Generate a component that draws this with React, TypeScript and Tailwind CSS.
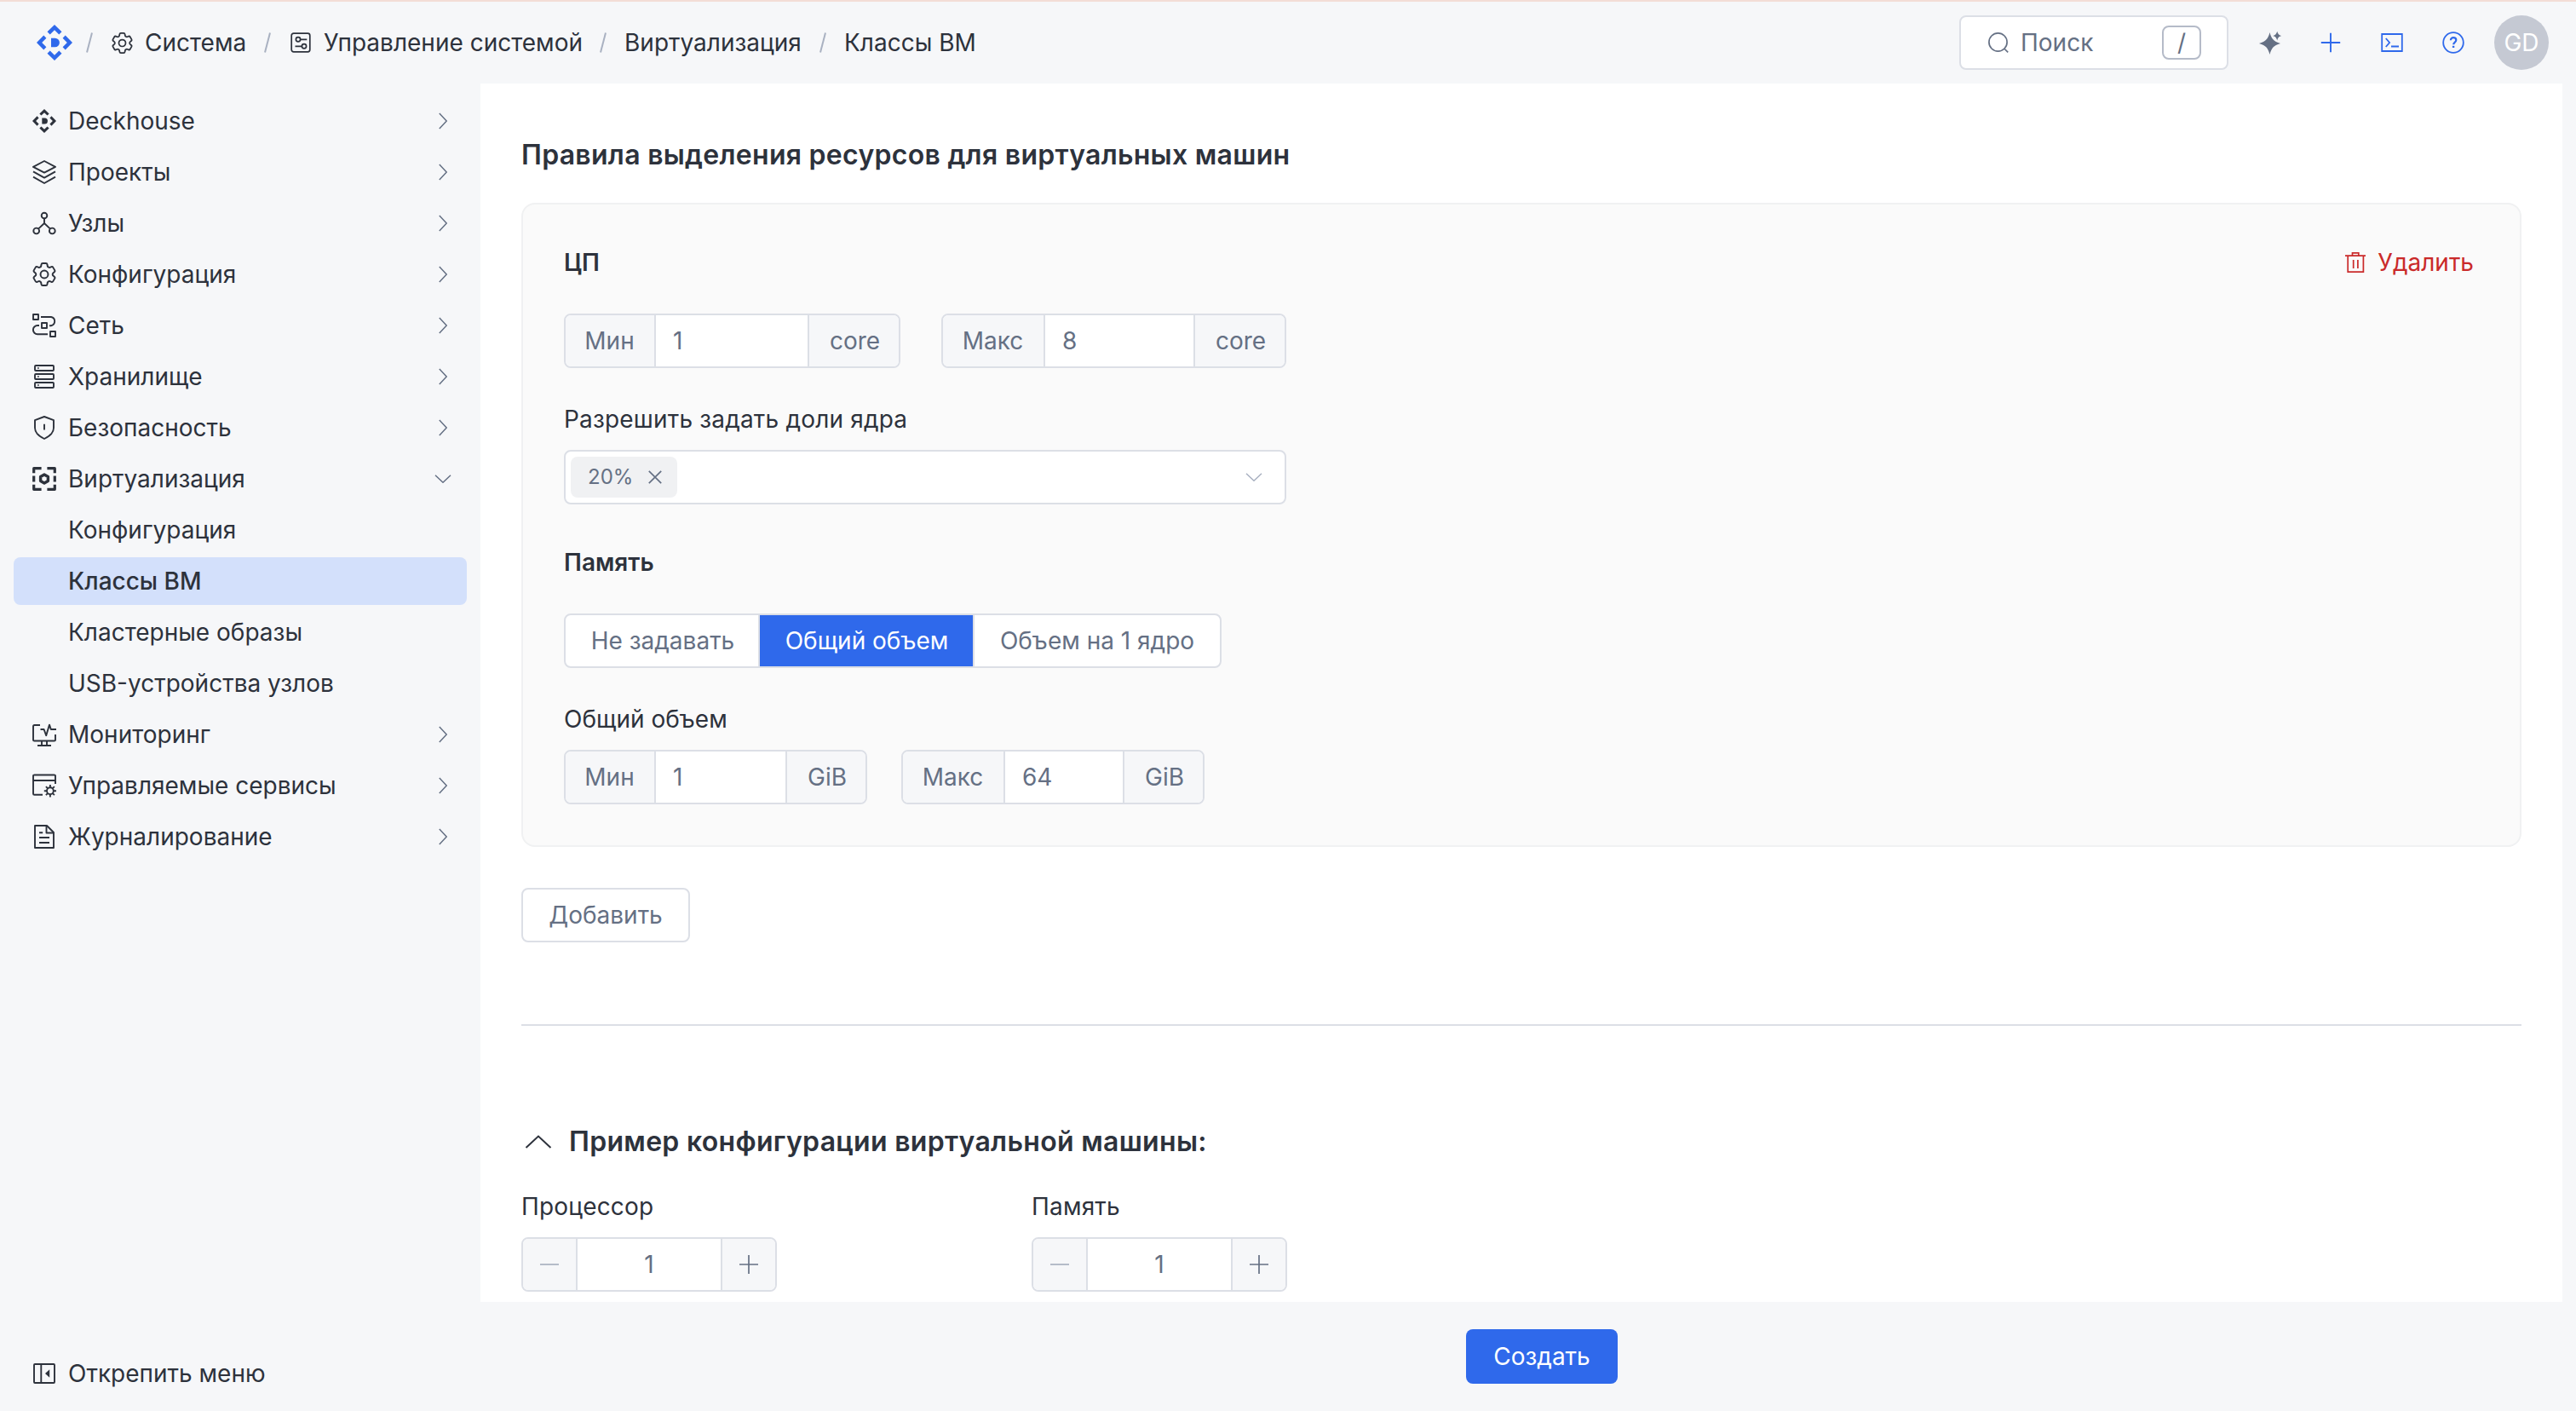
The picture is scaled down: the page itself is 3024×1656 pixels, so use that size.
import type { ReactNode } from "react";
import { clsx } from "clsx";

type IconName =
  | "deckhouse"
  | "layers"
  | "nodes"
  | "gear"
  | "network"
  | "storage"
  | "shield"
  | "virtualization"
  | "monitor"
  | "services"
  | "journal";

type NavItem = {
  label: string;
  icon: IconName;
  open?: boolean;
  children?: { label: string; active?: boolean }[];
};

const navItems: NavItem[] = [
  { label: "Deckhouse", icon: "deckhouse" },
  { label: "Проекты", icon: "layers" },
  { label: "Узлы", icon: "nodes" },
  { label: "Конфигурация", icon: "gear" },
  { label: "Сеть", icon: "network" },
  { label: "Хранилище", icon: "storage" },
  { label: "Безопасность", icon: "shield" },
  {
    label: "Виртуализация",
    icon: "virtualization",
    open: true,
    children: [
      { label: "Конфигурация" },
      { label: "Классы ВМ", active: true },
      { label: "Кластерные образы" },
      { label: "USB-устройства узлов" },
    ],
  },
  { label: "Мониторинг", icon: "monitor" },
  { label: "Управляемые сервисы", icon: "services" },
  { label: "Журналирование", icon: "journal" },
];

function Logo({ className }: { className?: string }) {
  return (
    <svg className={className} viewBox="0 0 42 42" fill="currentColor">
      {[0, 90, 180, 270].map((angle) => (
        <path
          key={angle}
          d="M21 0l8.5 8.3-3.2 3.1L21 6.2l-5.3 5.2-3.2-3.1z"
          transform={`rotate(${angle} 21 21)`}
        />
      ))}
      <path d="M17 15.7h4.6a5.3 5.3 0 0 1 0 10.6H17z" />
    </svg>
  );
}

function Gear({ className }: { className?: string }) {
  return (
    <svg
      className={className}
      viewBox="2.3 2.3 19.4 19.4"
      fill="none"
      stroke="currentColor"
      strokeWidth="1.35"
      strokeLinejoin="round"
    >
      <path d="M9.594 3.94c.09-.542.56-.94 1.11-.94h2.593c.55 0 1.02.398 1.11.94l.213 1.281c.063.374.313.686.645.87.074.04.147.083.22.127.325.196.72.257 1.075.124l1.217-.456a1.125 1.125 0 0 1 1.37.49l1.296 2.247a1.125 1.125 0 0 1-.26 1.431l-1.003.827c-.293.241-.438.613-.43.992a7.723 7.723 0 0 1 0 .255c-.008.378.137.75.43.991l1.004.827c.424.35.534.955.26 1.43l-1.298 2.247a1.125 1.125 0 0 1-1.369.491l-1.217-.456c-.355-.133-.75-.072-1.076.124a6.47 6.47 0 0 1-.22.128c-.331.183-.581.495-.644.869l-.213 1.281c-.09.543-.56.94-1.11.94h-2.594c-.55 0-1.019-.398-1.11-.94l-.213-1.281c-.062-.374-.312-.686-.644-.87a6.52 6.52 0 0 1-.22-.127c-.325-.196-.72-.257-1.076-.124l-1.217.456a1.125 1.125 0 0 1-1.369-.49l-1.297-2.247a1.125 1.125 0 0 1 .26-1.431l1.004-.827c.292-.24.437-.613.43-.991a6.932 6.932 0 0 1 0-.255c.007-.38-.138-.751-.43-.992l-1.004-.827a1.125 1.125 0 0 1-.26-1.43l1.297-2.247a1.125 1.125 0 0 1 1.37-.491l1.216.456c.356.133.751.072 1.076-.124.072-.044.146-.086.22-.128.332-.183.582-.495.644-.869l.214-1.28Z" />
      <circle cx="12" cy="12" r="3.1" />
    </svg>
  );
}

const navPaths: Record<Exclude<IconName, "deckhouse" | "gear">, ReactNode> = {
  layers: (
    <>
      <path d="M14 1l13 6.8-13 6.8L1 7.8z" />
      <path d="M1 13.4l13 7.2 13-7.2M1 19.6L14 27l13-7.4" />
    </>
  ),
  nodes: (
    <>
      <circle cx="14" cy="5" r="3.3" />
      <circle cx="4.7" cy="23" r="3.4" />
      <circle cx="23.3" cy="23" r="3.4" />
      <path d="M14 8.4v5.6l-7 6.6M14 14l7 6.6" />
    </>
  ),
  network: (
    <>
      <path d="M1 1h6v6H1zM11 11h6v6h-6zM21 21h6v6h-6z" />
      <path d="M10 4h12a5.2 5.2 0 0 1 0 10.2h-2M8 14H6a5.1 5.1 0 0 0 0 10.2h12" />
    </>
  ),
  storage: (
    <>
      <rect x="3" y="1" width="22" height="6" rx="1" />
      <rect x="3" y="11" width="22" height="6" rx="1" />
      <rect x="3" y="21" width="22" height="6" rx="1" />
      <path d="M6 4h1.8M6 14h1.8M6 24h1.8" strokeWidth="1.4" />
    </>
  ),
  shield: (
    <>
      <path d="M14 1l11 4.2V14c0 6-4.6 10-11 13C7.6 24 3 20 3 14V5.2z" />
      <path d="M14 9.8v6.6" />
    </>
  ),
  virtualization: (
    <>
      <path
        d="M10.6 1.7H1.7v5.6M17.4 1.7h8.900v5.600M10.600 26.300H1.700v-5.600M17.400 26.300h8.900v-5.600M1.700 10.600v6.800M26.300 10.600v6.800"
        strokeWidth="3.2"
      />
      <path d="M14 9l4.400 2.500v5L14 19l-4.400-2.500v-5z" strokeWidth="3.4" />
    </>
  ),
  monitor: (
    <>
      <path d="M9 3H2.400Q1 3 1 4.400V20.400Q1 21.500 2.400 21.500H25.600Q27 21.500 27 20.400V14" />
      <path d="M9.500 8H13.600L16.200 15.200L20 2.600L21.800 8H28M11 22v5M17 22v5M6 27h16" />
    </>
  ),
  services: (
    <>
      <path d="M27 12V2.600Q27 1.500 25.600 1.500H2.400Q1 1.500 1 2.600V23.400Q1 24.700 2.400 24.700H12M1 8h26" />
      <circle cx="20.9" cy="20.2" r="3.9" />
      <path d="M20.900 13v3M20.900 24.500v3M13.800 20.200h3M25 20.200h3M15.900 15.200l2 2M23.900 23.200l2 2M15.900 25.200l2-2M23.900 17.200l2-2" />
    </>
  ),
  journal: (
    <>
      <path d="M3 1h14l8 8v18H3z" />
      <path d="M16.500 1v8.500H25M8 9.200h4.200M8 15h12M8 21h12" />
    </>
  ),
};

function NavIcon({ name }: { name: IconName }) {
  if (name === "deckhouse") return <Logo className="size-7" />;
  if (name === "gear") return <Gear className="size-7" />;
  return (
    <svg
      className="size-7"
      viewBox="0 0 28 28"
      fill="none"
      stroke="currentColor"
      strokeWidth="1.9"
      strokeLinejoin="round"
    >
      {navPaths[name]}
    </svg>
  );
}

function Chevron({ className }: { className?: string }) {
  return (
    <svg
      className={clsx("h-[10px] w-[20px]", className)}
      viewBox="0 0 20 10"
      fill="none"
      stroke="currentColor"
      strokeWidth="1.5"
    >
      <path d="M1 .8l9 8.4 9-8.4" />
    </svg>
  );
}

function Slash() {
  return (
    <svg className="h-6 w-2 shrink-0 text-[#a9b1c1]" viewBox="0 0 8 24" stroke="currentColor" strokeWidth="2">
      <path d="M7 .5L1 23.5" />
    </svg>
  );
}

function Header() {
  return (
    <header className="flex h-[98px] shrink-0 items-center border-t-2 border-[#f3ddd6] pr-8 pl-[43px] text-[28px]">
      {/* Breadcrumbs */}
      <Logo className="mr-4 size-[42px] text-[#2f69eb]" />
      <Slash />
      <Gear className="ml-[22px] size-[25px]" />
      <span className="ml-[14px] w-[140px] whitespace-nowrap">Система</span>
      <Slash />
      <svg
        className="ml-[23px] size-6"
        viewBox="0 0 24 24"
        fill="none"
        stroke="currentColor"
        strokeWidth="1.7"
      >
        <rect x="1.2" y="1.2" width="21.6" height="21.6" rx="2.5" />
        <circle cx="9" cy="8.3" r="2.6" />
        <circle cx="16" cy="16.3" r="2.6" />
        <path d="M11.700 8.300h7.600M5.500 16.300h7.800" />
      </svg>
      <span className="ml-[15px] w-[324px] whitespace-nowrap">Управление системой</span>
      <Slash />
      <span className="ml-[21px] w-[229px] whitespace-nowrap">Виртуализация</span>
      <Slash />
      <span className="ml-[21px] whitespace-nowrap">Классы ВМ</span>

      {/* Search */}
      <div className="ml-auto flex h-16 w-[316px] items-center rounded-lg border-2 border-[#dcdfe6] bg-white pr-[30px] pl-8 text-[#657084]">
        <svg className="size-6" viewBox="0 0 24 24" fill="none" stroke="currentColor" strokeWidth="1.7">
          <circle cx="11.5" cy="11.5" r="10.6" />
          <path d="M18.800 19l4.400 4.400" />
        </svg>
        <span className="ml-[14px]">Поиск</span>
        <span className="ml-auto flex h-10 w-[46px] items-center justify-center rounded-lg border-2 border-[#b5bbc8]">
          /
        </span>
      </div>

      {/* Actions */}
      <div className="ml-[35px] flex items-center text-[#2f69eb]">
        <svg className="size-7 text-[#657084]" viewBox="0 0 28 28" fill="currentColor">
          <path d="M13.500 2c2 7.600 4.300 10.400 12.500 13-8.200 2.600-10.500 5.400-12.500 13C11.500 20.400 9.200 17.600 1 15c8.200-2.600 10.500-5.400 12.500-13z" />
          <path d="M22.200.8c1 3.200 1.900 4.300 5 5.300-3.100 1-4 2.100-5 5.300-1-3.200-1.900-4.300-5-5.300 3.100-1 4-2.100 5-5.300z" />
        </svg>
        <svg className="ml-[45px] size-6" viewBox="0 0 24 24" stroke="currentColor" strokeWidth="1.9">
          <path d="M12 .8v22.400M.8 12h22.400" />
        </svg>
        <svg
          className="ml-[47px] h-[22px] w-[26px]"
          viewBox="0 0 26 22"
          fill="none"
          stroke="currentColor"
          strokeWidth="1.8"
        >
          <path d="M1.200 1h23.600v20H1.200z" />
          <path d="M5.800 6l4.300 5-4.300 5M12 15.500h9" />
        </svg>
        <svg
          className="ml-[46px] size-[26px]"
          viewBox="0 0 26 26"
          fill="none"
          stroke="currentColor"
          strokeWidth="1.8"
        >
          <circle cx="13" cy="13" r="11.8" />
          <path
            d="M9.900 10.300c0-1.900 1.300-3.100 3.200-3.100s3.200 1.200 3.200 2.900c0 2.500-3.100 2.400-3.100 5.100"
            strokeWidth="2.2"
          />
          <path d="M13.100 16.800v2.200" strokeWidth="2.4" />
        </svg>
      </div>
      <div className="ml-[35px] flex size-16 items-center justify-center rounded-full bg-[#c5c9d3] text-white">
        GD
      </div>
    </header>
  );
}

function Sidebar() {
  return (
    <aside className="flex w-[564px] shrink-0 flex-col px-4 pt-4">
      <nav className="flex flex-col gap-1">
        {navItems.map((item) => (
          <div key={item.label} className="flex flex-col gap-1">
            <div className="flex h-14 items-center pr-[18px] pl-[22px]">
              <NavIcon name={item.icon} />
              <span className="ml-[14px]">{item.label}</span>
              <Chevron className={clsx("ml-auto text-[#657084]", !item.open && "-rotate-90")} />
            </div>
            {item.children?.map((child) => (
              <div
                key={child.label}
                className={clsx(
                  "flex h-14 items-center rounded-lg pl-16",
                  child.active && "bg-[#d3e0fb] font-medium",
                )}
              >
                {child.label}
              </div>
            ))}
          </div>
        ))}
      </nav>
      <div className="mt-auto mb-4 flex h-14 items-center pl-[22px]">
        <svg className="size-7" viewBox="0 0 28 28" fill="none" stroke="currentColor" strokeWidth="1.9">
          <rect x="2" y="3" width="24" height="22" rx="1" />
          <path d="M10.300 3v22" />
          <path d="M20.200 9.200v9.600L15 14z" fill="currentColor" stroke="none" />
        </svg>
        <span className="ml-[14px]">Открепить меню</span>
      </div>
    </aside>
  );
}

type RangeInputProps = {
  label: string;
  value: string;
  unit: string;
  className: string;
  labelClass: string;
  unitClass: string;
};

function RangeInput({ label, value, unit, className, labelClass, unitClass }: RangeInputProps) {
  return (
    <div
      className={clsx(
        "flex h-16 overflow-hidden rounded-lg border-2 border-[#dcdfe6] bg-white text-[#657084]",
        className,
      )}
    >
      <span
        className={clsx("flex items-center justify-center border-r-2 border-[#dcdfe6] bg-[#f6f7f9] pr-px", labelClass)}
      >
        {label}
      </span>
      <span className="flex flex-1 items-center pl-5">{value}</span>
      <span
        className={clsx("flex items-center justify-center border-l-2 border-[#dcdfe6] bg-[#f6f7f9] pl-0.5", unitClass)}
      >
        {unit}
      </span>
    </div>
  );
}

function Stepper({ label }: { label: string }) {
  return (
    <div className="w-[599px]">
      <div className="h-10 leading-10 tracking-[0.18px]">{label}</div>
      <div className="mt-4 flex h-16 w-[300px] overflow-hidden rounded-lg border-2 border-[#dcdfe6] text-[#657084]">
        <span className="flex w-16 items-center justify-center border-r-2 border-[#dcdfe6] bg-[#f6f7f9] text-[#b5bcc9]">
          <svg className="size-6" viewBox="0 0 24 24" stroke="currentColor" strokeWidth="2">
            <path d="M1 12h22" />
          </svg>
        </span>
        <span className="flex flex-1 items-center justify-center">1</span>
        <span className="flex w-16 items-center justify-center border-l-2 border-[#dcdfe6] bg-[#f6f7f9]">
          <svg className="size-6" viewBox="0 0 24 24" stroke="currentColor" strokeWidth="1.7">
            <path d="M12 1v22M1 12h22" />
          </svg>
        </span>
      </div>
    </div>
  );
}

function SizingPolicy() {
  return (
    <section className="mt-9 rounded-2xl border-2 border-[#f0f1f2] bg-[#fafafa] p-12">
      <div className="flex h-10 items-center justify-between">
        <h3 className="font-semibold">ЦП</h3>
        <button className="flex items-center pr-[6px] text-[#ca2a2a]">
          <svg className="size-6" viewBox="0 0 24 24" fill="none" stroke="currentColor" strokeWidth="1.7">
            <path d="M0 4.200h24M8.500 4.200V.9h7.300v3.300M3.200 4.200v19h18.200v-19M9.700 9v10M14.900 9v10" />
          </svg>
          <span className="ml-[14px]">Удалить</span>
        </button>
      </div>
      <div className="mt-10 flex gap-12">
        <RangeInput label="Мин" value="1" unit="core" className="w-[395px]" labelClass="w-[106px]" unitClass="w-[107px]" />
        <RangeInput label="Макс" value="8" unit="core" className="w-[405px]" labelClass="w-[120px]" unitClass="w-[107px]" />
      </div>

      <div className="mt-10 h-10 leading-10 tracking-[0.18px]">Разрешить задать доли ядра</div>
      <div className="mt-4 flex h-16 w-[848px] items-center justify-between rounded-lg border-2 border-[#dcdfe6] bg-white pr-[26px] pl-[6px]">
        <span className="flex h-12 w-[125px] items-center justify-between rounded-lg bg-[#f0f1f3] pr-[18px] pl-5 text-2xl text-[#657084]">
          20%
          <svg className="size-4" viewBox="0 0 16 16" stroke="currentColor" strokeWidth="1.7">
            <path d="M.8.8l14.400 14.400M15.200.8L.8 15.200" />
          </svg>
        </span>
        <Chevron className="text-[#a9b1c1]" />
      </div>

      <h3 className="mt-12 h-10 leading-10 font-semibold">Память</h3>
      <div className="mt-10 flex h-16 w-[772px] overflow-hidden rounded-lg border-2 border-[#dcdfe6] bg-white text-[#657084]">
        <span className="flex w-[228px] items-center justify-center border-r-2 border-[#dcdfe6] pl-0.5">
          Не задавать
        </span>
        <span className="flex w-[250px] items-center justify-center bg-[#2f69eb] pl-px text-white">Общий объем</span>
        <span className="flex flex-1 items-center justify-center border-l-2 border-[#dcdfe6]">Объем на 1 ядро</span>
      </div>

      <div className="mt-10 h-10 leading-10">Общий объем</div>
      <div className="mt-4 flex gap-10">
        <RangeInput label="Мин" value="1" unit="GiB" className="w-[356px]" labelClass="w-[106px]" unitClass="w-[94px]" />
        <RangeInput label="Макс" value="64" unit="GiB" className="w-[356px]" labelClass="w-[120px]" unitClass="w-[94px]" />
      </div>
    </section>
  );
}

export default function App() {
  return (
    <div className="flex h-[1656px] flex-col bg-[#f6f7f9] font-['Inter',sans-serif] text-[28px] text-[#2d323c]">
      <Header />
      <div className="flex flex-1">
        <Sidebar />
        <div className="flex flex-1 flex-col">
          <main className="mr-4 flex h-[1430px] flex-col bg-white px-12 pt-16">
            <h2 className="text-[32px] leading-10 font-semibold tracking-[0.28px]">
              Правила выделения ресурсов для виртуальных машин
            </h2>
            <SizingPolicy />
            <button className="mt-12 h-16 w-[198px] shrink-0 rounded-lg border-2 border-[#dcdfe6] text-[#657084]">
              Добавить
            </button>
            <hr className="mt-24 border-t-2 border-[#dcdfe6]" />

            {/* VM configuration example */}
            <div className="mt-[116px] flex h-10 items-center text-[32px] font-semibold tracking-[0.3px]">
              <svg className="ml-1 h-4 w-8" viewBox="0 0 32 16" fill="none" stroke="currentColor" strokeWidth="2">
                <path d="M1.500 15L16 1.500 30.500 15" />
              </svg>
              <span className="ml-5">Пример конфигурации виртуальной машины:</span>
            </div>
            <div className="mt-9 flex">
              <Stepper label="Процессор" />
              <Stepper label="Память" />
            </div>
          </main>

          {/* Footer */}
          <div className="mr-4 flex h-32 items-center justify-center pl-12">
            <button className="h-16 w-[178px] rounded-lg bg-[#2f69eb] text-white">Создать</button>
          </div>
        </div>
      </div>
    </div>
  );
}
